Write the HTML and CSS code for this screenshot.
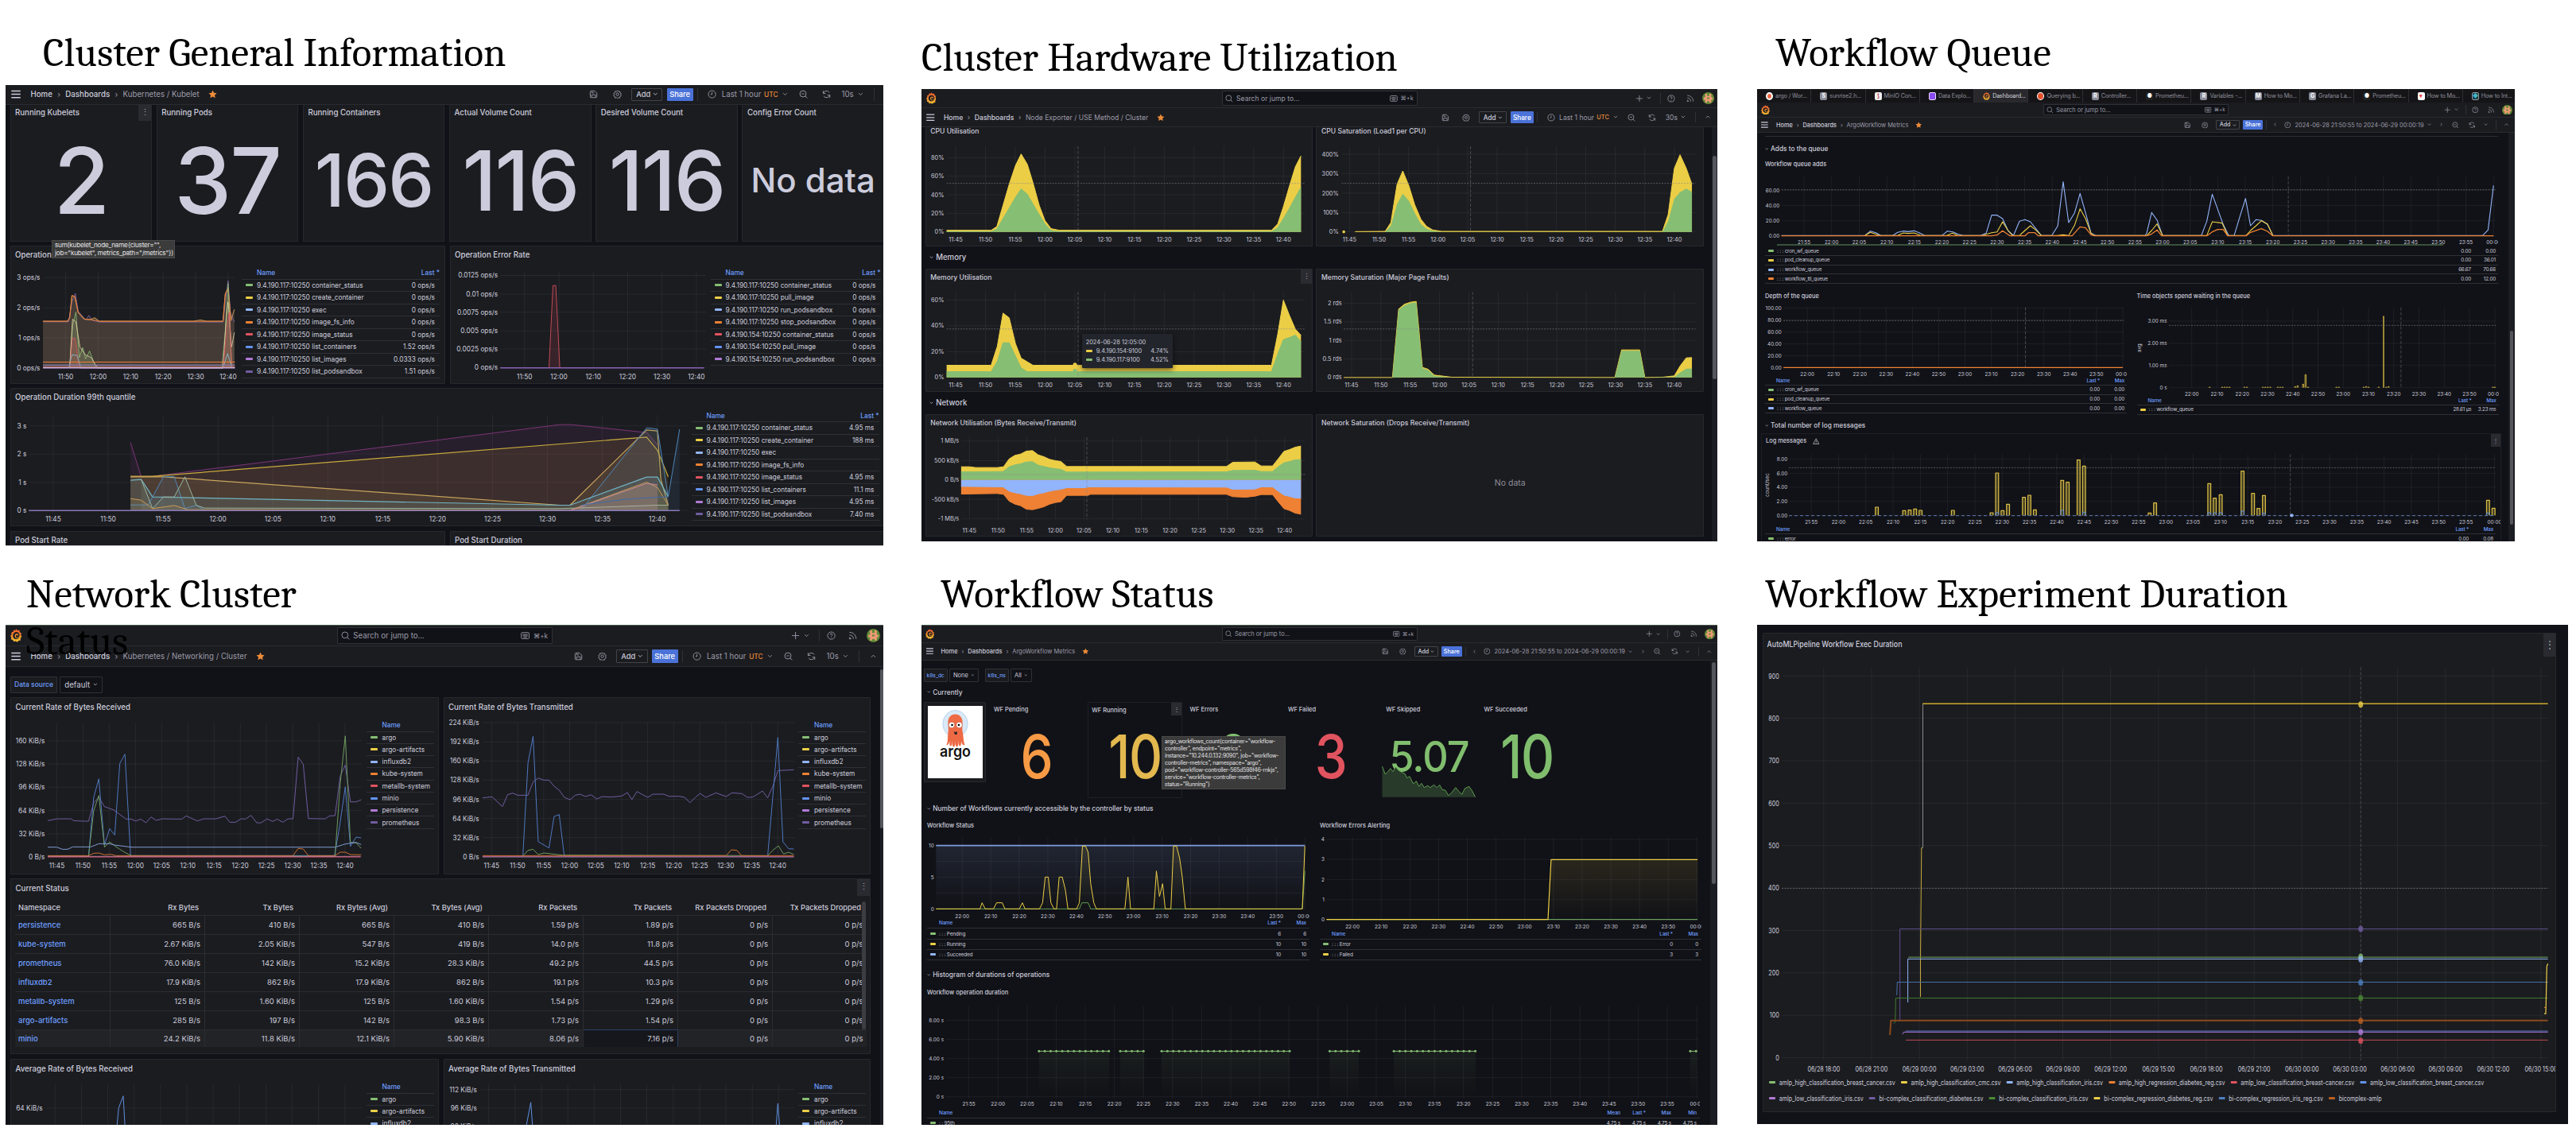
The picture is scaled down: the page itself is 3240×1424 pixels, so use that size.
FILE: index.html
```html
<!DOCTYPE html>
<html lang="en">
<head>
<meta charset="utf-8">
<title>Cluster dashboards</title>
<link rel="stylesheet" href="styles.css">
</head>
<body>
<svg width="0" height="0" class="defs" aria-hidden="true">
  <defs>
    <linearGradient id="flame" x1="0" y1="0" x2="0" y2="1"><stop offset="0" stop-color="#f0562b"/><stop offset="1" stop-color="#f5c332"/></linearGradient>
    <linearGradient id="fade-blue" x1="0" y1="0" x2="0" y2="1"><stop offset="0" stop-color="#92b4fa" stop-opacity=".12"/><stop offset="1" stop-color="#92b4fa" stop-opacity="0"/></linearGradient>
    <linearGradient id="fade-yellow" x1="0" y1="0" x2="0" y2="1"><stop offset="0" stop-color="#ecce46" stop-opacity=".11"/><stop offset="1" stop-color="#ecce46" stop-opacity="0"/></linearGradient>
    <linearGradient id="fade-green" x1="0" y1="0" x2="0" y2="1"><stop offset="0" stop-color="#86be73" stop-opacity=".07"/><stop offset="1" stop-color="#86be73" stop-opacity="0"/></linearGradient>
  </defs>
  <symbol id="i-menu" viewBox="0 0 16 16"><path d="M1 3h14M1 8h14M1 13h14" stroke-width="1.8"/></symbol>
  <symbol id="i-star" viewBox="0 0 16 16"><path d="M8 .8l2.2 4.6 5 .7-3.600 3.500.9 5L8 12.200l-4.500 2.400.9-5L.8 6.100l5-.7z" fill="#ec8b39" stroke="none"/></symbol>
  <symbol id="i-save" viewBox="0 0 16 16"><path d="M2 3.500A1.500 1.500 0 013.500 2H10l4 4v6.500a1.500 1.500 0 01-1.500 1.500h-9A1.500 1.500 0 012 12.500zM5 2v3.500h4M4.500 14V9h7v5"/></symbol>
  <symbol id="i-gear" viewBox="0 0 16 16"><circle cx="8" cy="8" r="2.400"/><path d="M8 1.200l1.700 1.900 2.500-.4.5 2.500 2.200 1.200L13.800 8.700l1 2.300-2.300 1.200-.5 2.500-2.500-.4L8 15.300 6.400 14l-2.600.6-.5-2.500-2.200-1.200L2.200 8.600l-1-2.300 2.300-1.200.5-2.500 2.400.5z"/></symbol>
  <symbol id="i-clock" viewBox="0 0 16 16"><circle cx="8" cy="8" r="6.600"/><path d="M8 4v4.300H5.500"/></symbol>
  <symbol id="i-zoom" viewBox="0 0 16 16"><circle cx="7.200" cy="7.200" r="5.700"/><path d="M11.500 11.500l3.500 3.500M4.800 7.200h4.800"/></symbol>
  <symbol id="i-refresh" viewBox="0 0 16 16"><path d="M2 6.500A6.200 6.200 0 0113.300 5M14 9.500A6.200 6.200 0 012.700 11M2 1.800v4.700h4.500M14 14.200V9.500H9.500"/></symbol>
  <symbol id="i-caret" viewBox="0 0 10 10"><path d="M1.500 3.200L5 6.700l3.500-3.500"/></symbol>
  <symbol id="i-up" viewBox="0 0 10 10"><path d="M1 7.200l4-4 4 4"/></symbol>
  <symbol id="i-left" viewBox="0 0 10 10"><path d="M6.500 1.500L3.500 5l3 3.500"/></symbol>
  <symbol id="i-right" viewBox="0 0 10 10"><path d="M3.500 1.500L6.500 5l-3 3.500"/></symbol>
  <symbol id="i-plus" viewBox="0 0 16 16"><path d="M8 1.500v13M1.500 8h13"/></symbol>
  <symbol id="i-help" viewBox="0 0 16 16"><circle cx="8" cy="8" r="6.600"/><path d="M6.200 6.300a1.800 1.800 0 113 1.400c-.8.600-1.200.9-1.200 1.700M8 11v1"/></symbol>
  <symbol id="i-rss" viewBox="0 0 16 16"><path d="M2 2c7 0 12 5 12 12M2 7c4.500 0 7 2.500 7 7M2 11.500c1.500 0 2.500 1 2.500 2.500H2z"/></symbol>
  <symbol id="i-search" viewBox="0 0 16 16"><circle cx="7" cy="7" r="5.600"/><path d="M11 11l4 4"/></symbol>
  <symbol id="i-kbd" viewBox="0 0 16 16"><rect x="1" y="2.500" width="14" height="11" rx="1.500"/><path d="M3.500 6h9M3.500 8.500h9M5 11h6"/></symbol>
  <symbol id="i-warn" viewBox="0 0 16 16"><path d="M8 1.500l6.800 12.500H1.200zM8 6v4M8 11.500v1.200"/></symbol>
  <symbol id="i-grafana" viewBox="0 0 16 18"><path fill="url(#flame)" stroke="none" d="M8 0l1.800 2 2.800-.3.500 2.800 2.300 1.200-.9 2.600 1.300 2.500-1.800 2 .2 2.700-2.800.6L9.600 18 7.400 16.600l-2.700.8L3.400 15 .9 14.300l.6-2.600L0 9.500l1.700-1.900L1.400 5l2.400-1.100.9-2.500 2.200.4z"/><path fill="#1b1c20" stroke="none" d="M8.300 4.200a4.900 4.900 0 00-4.800 5c0 2.800 2.100 4.800 4.700 4.800 2 0 3.500-1.200 4.100-2.800-.9 1.100-2 1.600-3.200 1.500a3.300 3.300 0 01-3-3.300c0-1.700 1.200-3 2.800-3 1.300 0 2.300.9 2.300 2.100 0 .9-.5 1.500-1.200 1.600.2-.2.3-.5.300-.8 0-.6-.5-1.100-1.200-1.100-.8 0-1.400.7-1.400 1.600 0 1.200.9 2 2.100 2 1.700 0 3-1.400 3-3.200 0-2.500-2-4.400-4.500-4.400z"/></symbol>
  <symbol id="i-avatar" viewBox="0 0 16 16"><circle cx="8" cy="8" r="8" fill="#5f8a35" stroke="none"/><path fill="#f09a76" stroke="none" d="M4 2h2.500v3h3V2H12v5h2v3h-2v4H9.500v-2h-3v2H4v-4H2V7h2z"/><path fill="#5f8a35" stroke="none" d="M6.500 7h3v2h-3z"/></symbol>
</svg>

<main class="sheet">
  <figure class="shot s1">
    <figcaption>Cluster General Information</figcaption>
    <div class="board b1">
      <div data-nav="Kubernetes / Kubelet" data-refresh="10s" data-nocollapse></div>
      <div class="stats">
        <section class="panel"><h3>Running Kubelets</h3><i class="dots"></i><b class="xl">2</b></section>
        <section class="panel"><h3>Running Pods</h3><b class="xl">37</b></section>
        <section class="panel"><h3>Running Containers</h3><b class="md">166</b></section>
        <section class="panel"><h3>Actual Volume Count</h3><b class="big">116</b></section>
        <section class="panel"><h3>Desired Volume Count</h3><b class="big">116</b></section>
        <section class="panel"><h3>Config Error Count</h3><b class="sm">No data</b></section>
        <div class="tip query">sum(kubelet_node_name{cluster="",<br>job="kubelet", metrics_path="/metrics"})</div>
      </div>
      <div class="pair ops">
        <section class="panel"><h3>Operation</h3><div class="body"><svg class="chart" data-chart="opRate"></svg><div class="legend bar-r" data-legend="opRate"></div></div></section>
        <section class="panel"><h3>Operation Error Rate</h3><div class="body"><svg class="chart" data-chart="opError"></svg><div class="legend" data-legend="opError"></div></div></section>
      </div>
      <section class="panel quant"><h3>Operation Duration 99th quantile</h3><div class="body"><svg class="chart" data-chart="opDuration"></svg><div class="legend" data-legend="opDuration"></div></div></section>
      <div class="pair tail">
        <section class="panel"><h3>Pod Start Rate</h3></section>
        <section class="panel"><h3>Pod Start Duration</h3></section>
      </div>
    </div>
  </figure>

  <figure class="shot s2">
    <figcaption>Cluster Hardware Utilization</figcaption>
    <div class="board b2">
      <div data-top></div>
      <div data-nav="Node Exporter / USE Method / Cluster" data-refresh="30s"></div>
      <div class="scroll">
        <div class="pair r1">
          <section class="panel"><h3>CPU Utilisation</h3><svg class="chart" data-chart="cpuUtil"></svg></section>
          <section class="panel"><h3>CPU Saturation (Load1 per CPU)</h3><svg class="chart" data-chart="cpuSat"></svg></section>
        </div>
        <h2><svg class="ic"><use href="#i-caret"/></svg>Memory</h2>
        <div class="pair r2">
          <section class="panel"><h3>Memory Utilisation</h3><i class="dots"></i><svg class="chart" data-chart="memUtil"></svg>
            <div class="tip point"><p>2024-06-28 12:05:00</p><p><i class="sw y"></i>9.4.190.154:9100<span>4.74%</span></p><p><i class="sw g"></i>9.4.190.117:9100<span>4.52%</span></p></div>
          </section>
          <section class="panel"><h3>Memory Saturation (Major Page Faults)</h3><svg class="chart" data-chart="memSat"></svg></section>
        </div>
        <h2><svg class="ic"><use href="#i-caret"/></svg>Network</h2>
        <div class="pair r3">
          <section class="panel"><h3>Network Utilisation (Bytes Receive/Transmit)</h3><svg class="chart" data-chart="netUtil"></svg></section>
          <section class="panel"><h3>Network Saturation (Drops Receive/Transmit)</h3><div class="empty">No data</div></section>
        </div>
        <i class="thumb"></i>
      </div>
    </div>
  </figure>

  <figure class="shot s3">
    <figcaption>Workflow Queue</figcaption>
    <div class="board b3">
      <div class="tabs">
        <span><i class="fav argo"></i>argo / Wor...</span><span><i class="fav gr">S</i>sunrise2.h...</span><span><i class="fav minio">⟆</i>MinIO Con...</span><span><i class="fav data"></i>Data Explo...</span><span class="on"><svg class="fv"><use href="#i-grafana"/></svg>Dashboard...</span><span><i class="fav prom"></i>Querying b...</span><span><i class="fav gr">R</i>Controller...</span><span><i class="fav dk">●</i>Prometheu...</span><span><i class="fav gr">R</i>Variables -...</span><span><i class="fav gr">M</i>How to Mo...</span><span><i class="fav gr">G</i>Grafana La...</span><span><i class="fav dk">●</i>Prometheu...</span><span><i class="fav wh">▾</i>How to Mo...</span><span><i class="fav teal">◆</i>How to Int...</span>
      </div>
      <div data-top></div>
      <div data-nav="ArgoWorkflow Metrics" data-range></div>
      <div class="scroll">
        <div class="cut"></div>
        <h2><svg class="ic"><use href="#i-caret"/></svg>Adds to the queue</h2>
        <section class="flat adds"><h3>Workflow queue adds</h3><svg class="chart" data-chart="queueAdds"></svg><div class="legend" data-legend="queueAdds"></div></section>
        <div class="pair depth">
          <section class="flat"><h3>Depth of the queue</h3><svg class="chart" data-chart="queueDepth"></svg><div class="legend" data-legend="queueDepth"></div></section>
          <section class="flat"><h3>Time objects spend waiting in the queue</h3><svg class="chart" data-chart="queueWait"></svg><div class="legend" data-legend="queueWait"></div></section>
        </div>
        <h2><svg class="ic"><use href="#i-caret"/></svg>Total number of log messages</h2>
        <section class="flat logs"><h3>Log messages <svg class="ic"><use href="#i-warn"/></svg></h3><i class="dots"></i><svg class="chart" data-chart="logs"></svg><div class="legend" data-legend="logs"></div></section>
        <i class="thumb"></i>
      </div>
    </div>
  </figure>

  <figure class="shot s4">
    <figcaption>Network Cluster Status</figcaption>
    <div class="board b4">
      <div data-top></div>
      <div data-nav="Kubernetes / Networking / Cluster" data-refresh="10s"></div>
      <div class="scroll">
        <div class="vars"><label>Data source</label><span>default <svg class="ic"><use href="#i-caret"/></svg></span></div>
        <div class="pair rates">
          <section class="panel"><h3>Current Rate of Bytes Received</h3><div class="body"><svg class="chart" data-chart="rx"></svg><div class="legend" data-legend="ns"></div></div></section>
          <section class="panel"><h3>Current Rate of Bytes Transmitted</h3><div class="body"><svg class="chart" data-chart="tx"></svg><div class="legend" data-legend="ns"></div></div></section>
        </div>
        <section class="panel status"><h3>Current Status</h3><i class="dots"></i>
          <table>
            <thead><tr><th>Namespace</th><th>Rx Bytes</th><th>Tx Bytes</th><th>Rx Bytes (Avg)</th><th>Tx Bytes (Avg)</th><th>Rx Packets</th><th>Tx Packets</th><th>Rx Packets Dropped</th><th>Tx Packets Dropped</th></tr></thead>
            <tbody>
              <tr><td>persistence</td><td>665 B/s</td><td>410 B/s</td><td>665 B/s</td><td>410 B/s</td><td>1.59 p/s</td><td>1.89 p/s</td><td>0 p/s</td><td>0 p/s</td></tr>
              <tr><td>kube-system</td><td>2.67 KiB/s</td><td>2.05 KiB/s</td><td>547 B/s</td><td>419 B/s</td><td>14.0 p/s</td><td>11.8 p/s</td><td>0 p/s</td><td>0 p/s</td></tr>
              <tr><td>prometheus</td><td>76.0 KiB/s</td><td>142 KiB/s</td><td>15.2 KiB/s</td><td>28.3 KiB/s</td><td>49.2 p/s</td><td>44.5 p/s</td><td>0 p/s</td><td>0 p/s</td></tr>
              <tr><td>influxdb2</td><td>17.9 KiB/s</td><td>862 B/s</td><td>17.9 KiB/s</td><td>862 B/s</td><td>19.1 p/s</td><td>10.3 p/s</td><td>0 p/s</td><td>0 p/s</td></tr>
              <tr><td>metallb-system</td><td>125 B/s</td><td>1.60 KiB/s</td><td>125 B/s</td><td>1.60 KiB/s</td><td>1.54 p/s</td><td>1.29 p/s</td><td>0 p/s</td><td>0 p/s</td></tr>
              <tr><td>argo-artifacts</td><td>285 B/s</td><td>197 B/s</td><td>142 B/s</td><td>98.3 B/s</td><td>1.73 p/s</td><td>1.54 p/s</td><td>0 p/s</td><td>0 p/s</td></tr>
              <tr class="hover"><td>minio</td><td>24.2 KiB/s</td><td>11.8 KiB/s</td><td>12.1 KiB/s</td><td>5.90 KiB/s</td><td>8.06 p/s</td><td class="cell">7.16 p/s</td><td>0 p/s</td><td>0 p/s</td></tr>
            </tbody>
          </table>
          <i class="inner-thumb"></i>
        </section>
        <div class="pair avg">
          <section class="panel"><h3>Average Rate of Bytes Received</h3><div class="body"><svg class="chart" data-chart="avgRx"></svg><div class="legend" data-legend="ns"></div></div></section>
          <section class="panel"><h3>Average Rate of Bytes Transmitted</h3><div class="body"><svg class="chart" data-chart="avgTx"></svg><div class="legend" data-legend="ns"></div></div></section>
        </div>
        <i class="thumb"></i>
      </div>
    </div>
  </figure>

  <figure class="shot s5">
    <figcaption>Workflow Status</figcaption>
    <div class="board b5">
      <div data-top></div>
      <div data-nav="ArgoWorkflow Metrics" data-range></div>
      <div class="scroll">
        <div class="vars"><label>k8s_dc</label><span>None <svg class="ic"><use href="#i-caret"/></svg></span><label class="nx">k8s_ns</label><span>All <svg class="ic"><use href="#i-caret"/></svg></span></div>
        <h2><svg class="ic"><use href="#i-caret"/></svg>Currently</h2>
        <div class="now">
          <section class="panel logo">
            <svg viewBox="0 0 69 91">
              <rect width="69" height="91" fill="#fff"/>
              <ellipse cx="34.500" cy="22.500" rx="15.500" ry="17" fill="#d9e9f8" stroke="#b9d4ee"/>
              <path d="M25.500 24c-1-9 3-13.500 9-13.500s10 4.500 9 13.500c-.5 5 0 8 .5 10 .8 5 1 12 2.500 15-2.500 1-4-1-4.500-5 0 3 0 6-1.500 6.500-2 0-2-4-2.200-7 0 3 0 8-1.700 8s-2-4-2-8c-.2 4 0 8-2 8s-1.700-4-1.700-8c-.5 3-.2 7-2 7s-1.600-3-1.500-6c-1 3-2 5.500-4 4.500 2-3 1.500-10 2-15 .4-2 .600-5 .1-10z" fill="#ee6a45"/>
              <circle cx="30" cy="24" r="3.800" fill="#fff" stroke="#c24a2c" stroke-width=".6"/><circle cx="39.500" cy="24" r="3.800" fill="#fff" stroke="#c24a2c" stroke-width=".6"/>
              <circle cx="30.500" cy="24" r="1.300"/><circle cx="39" cy="24" r="1.300"/>
              <path d="M32.500 32q2.300 2 4.500 0l-.5 4h-2.500z" fill="#222"/>
              <text x="34.500" y="64" text-anchor="middle" class="wordmark" textLength="39" lengthAdjust="spacingAndGlyphs">argo</text>
            </svg>
          </section>
          <section class="flat"><h3>WF Pending</h3><b class="or">6</b></section>
          <section class="flat frame"><h3>WF Running</h3><i class="dots"></i><b class="ye">10</b></section>
          <section class="flat"><h3>WF Errors</h3><b class="gn">0</b></section>
          <section class="flat"><h3>WF Failed</h3><b class="re">3</b></section>
          <section class="flat"><h3>WF Skipped</h3><b class="gn small">5.07</b><svg class="spark" data-chart="spark"></svg></section>
          <section class="flat"><h3>WF Succeeded</h3><b class="gn">10</b></section>
          <div class="tip labels">argo_workflows_count{container="workflow-<br>controller", endpoint="metrics",<br>instance="10.244.0.132:9090", job="workflow-<br>controller-metrics", namespace="argo",<br>pod="workflow-controller-565d598f46-rnkjs",<br>service="workflow-controller-metrics",<br>status="Running"}</div>
        </div>
        <h2 class="second"><svg class="ic"><use href="#i-caret"/></svg>Number of Workflows currently accessible by the controller by status</h2>
        <div class="pair wf">
          <section class="flat"><h3>Workflow Status</h3><svg class="chart" data-chart="wfStatus"></svg><div class="legend" data-legend="wfStatus"></div></section>
          <section class="flat"><h3>Workflow Errors Alerting</h3><svg class="chart" data-chart="wfErrors"></svg><div class="legend" data-legend="wfErrors"></div></section>
        </div>
        <h2 class="third"><svg class="ic"><use href="#i-caret"/></svg>Histogram of durations of operations</h2>
        <section class="flat hist"><h3>Workflow operation duration</h3><svg class="chart" data-chart="opHist"></svg><div class="legend" data-legend="opHist"></div></section>
        <i class="thumb"></i>
      </div>
    </div>
  </figure>

  <figure class="shot s6">
    <figcaption>Workflow Experiment Duration</figcaption>
    <div class="board b6">
      <section class="panel"><h3>AutoMLPipeline Workflow Exec Duration</h3><i class="dots"></i><svg class="chart" data-chart="exec"></svg>
        <div class="keys">
          <p><span><i class="sw g"></i>amlp_high_classification_breast_cancer.csv</span><span><i class="sw y"></i>amlp_high_classification_cmc.csv</span><span><i class="sw b"></i>amlp_high_classification_iris.csv</span><span><i class="sw o"></i>amlp_high_regression_diabetes_reg.csv</span><span><i class="sw r"></i>amlp_low_classification_breast-cancer.csv</span><span><i class="sw sb"></i>amlp_low_classification_breast_cancer.csv</span></p>
          <p><span><i class="sw p"></i>amlp_low_classification_iris.csv</span><span><i class="sw dp"></i>bi-complex_classification_diabetes.csv</span><span><i class="sw dg"></i>bi-complex_classification_iris.csv</span><span><i class="sw y"></i>bi-complex_regression_diabetes_reg.csv</span><span><i class="sw db"></i>bi-complex_regression_iris_reg.csv</span><span><i class="sw br"></i>bicomplex-amlp</span></p>
        </div>
      </section>
    </div>
  </figure>
</main>
<script src="charts.js"></script>
</body>
</html>
```

FILE: styles.css
```css
* { box-sizing: border-box; }
body { margin: 0; background: #fff; font-family: Inter, "Liberation Sans", sans-serif; }
.defs { position: absolute; }

.sheet {
  width: 3240px; height: 1424px; overflow: hidden;
  padding-left: 7px;
  display: grid;
  grid-template-columns: 1152px 1051px 1020px;
  grid-template-rows: 687px 737px;
}
.shot { margin: 0; display: flex; flex-direction: column; }
figcaption {
  font-family: Cambria, Caladea, "Liberation Serif", serif;
  font-size: 51px; line-height: 59px; color: #000; white-space: nowrap;
  flex: none;
}
.s1 figcaption { height: 107px; padding: 37px 0 0 47px; }
.s2 figcaption { height: 112px; padding: 43px 0 0 0; }
.s3 figcaption { height: 112px; padding: 37px 0 0 23px; }
.s4 figcaption, .s5 figcaption, .s6 figcaption { height: 99px; padding-top: 31px; }
.s4 figcaption { padding-left: 26px; width: 420px; white-space: normal; z-index: 5; }
.s5 figcaption { padding-left: 24px; }
.s6 figcaption { padding-left: 10px; }

/* boards */
.board {
  background: #111217; color: #ccccdc; overflow: hidden; position: relative;
  display: flex; flex-direction: column; font-weight: 400;
}
.b1 { width: 1104px; height: 581px; font-size: 9.7px; border-bottom: 1px solid #d3ccd2; --bar: 24.5px; }
.b2 { width: 1001px; height: 569px; font-size: 8.600px; --bar: 24px; --sw: 246px; }
.b3 { width: 953px; height: 569px; font-size: 7.400px; --bar: 19px; --sw: 233px; }
.b4 { width: 1104px; height: 629px; font-size: 9.700px; --bar: 26px; --sw: 271px; border-top: 1px solid #4a5a50; }
.b5 { width: 1001px; height: 629px; font-size: 7.500px; --bar: 22px; --sw: 246px; border-top: 1px solid #4a5a50; }
.b6 { width: 1020px; height: 628px; font-size: 10.500px; padding: 10px 15px 0 7px; }

.ic { width: 1.15em; height: 1.15em; fill: none; stroke: currentColor; stroke-width: 1.3; flex: none; overflow: visible; }
.ic.c { width: .7em; height: .7em; }
h2, h3, p { margin: 0; }
h3 { font-size: 1em; font-weight: 500; padding-left: 5.5px; white-space: nowrap; flex: none; }
h2 { font-size: 1.12em; font-weight: 500; display: flex; align-items: center; gap: .3em; white-space: nowrap; flex: none; }
h2 .ic { width: .55em; height: .55em; }

/* toolbars */
.top, .nav {
  height: var(--bar); flex: none; background: #1b1c20; border-bottom: 1px solid #2a2b31;
  display: flex; align-items: center; white-space: nowrap; color: #9b9ba8;
}
.top { display: grid; grid-template-columns: 1fr var(--sw) 1fr; }
.top .brand { width: 1.5em; height: 1.75em; margin-left: .65em; }
.search {
  height: calc(var(--bar) - 5px); border: 1px solid #303137; border-radius: 1px; background: #111217;
  display: flex; align-items: center; gap: .45em; padding: 0 .45em;
}
.search .kbi { margin-left: auto; }
.search .kb { font-size: .85em; }
.top .rt { display: flex; align-items: center; justify-content: flex-end; padding-right: .45em; }
.top .av { width: 1.75em; height: 1.75em; margin-left: 1.2em; }
.sep { width: 1px; height: 55%; min-height: 1.600em; background: #303137; flex: none; }
.nav .ic.m { width: 1.45em; height: 1.35em; color: #ccccdc; margin: 0 1.200em 0 .6em; }
.nav em { font-style: normal; font-weight: 500; color: #ccccdc; }
.nav > i { font-style: normal; width: 1.700em; text-align: center; }
.nav u { text-decoration: none; }
.nav .st { margin-left: 1.200em; }
.nav .rt { margin-left: auto; display: flex; align-items: center; height: 100%; }
.add, .share { height: 1.75em; display: flex; align-items: center; justify-content: center; gap: .3em; border-radius: 1px; font-size: .96em; font-weight: 500; color: #ccccdc; }
.add { width: 4.2em; border: 1px solid #43444b; }
.share { width: 3.550em; background: #4a72d8; color: #fff; margin: 0 .55em; }
.utc { color: #ec8b39; font-size: .86em; font-weight: 500; }

/* panels */
.panel { background: #1b1c20; border: 1px solid #27282d; border-radius: 1px; position: relative; display: flex; flex-direction: column; min-width: 0; overflow: visible; }
.flat { position: relative; display: flex; flex-direction: column; min-width: 0; }
.pair { display: grid; grid-template-rows: 100%; flex: none; }
.body { display: flex; flex: 1; min-height: 0; }
.chart { flex: 1; min-width: 0; min-height: 0; width: 100%; height: 0; display: block; overflow: hidden; }
.chart text { font-size: .857em; fill: #ccccdc; }
.body .chart { width: 0; height: 100%; }
.dots { position: absolute; right: 0; top: 0; width: 1.65em; height: 2.150em; background: #2a2b30; display: flex; align-items: center; justify-content: center; font-style: normal; }
.dots::before { content: "⋮"; color: #a5a5b3; font-size: 1.100em; line-height: 1; }
.tip { position: absolute; z-index: 4; background: #3b3b3b; color: #e3e3e6; border: 1px solid #4a4a4a; white-space: nowrap; }
.thumb { position: absolute; border-radius: 3px; background: #55565c; }
.scroll { flex: 1; position: relative; min-height: 0; overflow: hidden; }

/* legends */
.legend { flex: none; font-size: .857em; }
.legend div { display: flex; align-items: center; height: var(--rh); border-bottom: 1px solid #2f3035; white-space: nowrap; }
.legend div.hd { color: #6e9fff; font-weight: 500; }
.legend .nm { flex: 1; padding-left: 9px; }
.legend .sw + .nm { padding-left: 5px; }
.legend .hd .nm { padding-left: calc(var(--in) + 14px); }
.sw { display: inline-block; width: 9px; height: 3px; border-radius: 1px; flex: none; }
.legend .sw { margin-left: var(--in); }
.legend .v { text-align: right; }
.g { background: #86be73; } .y { background: #ecce46; } .b { background: #92b4fa; } .o { background: #ee8133; }
.r { background: #e0535f; } .sb { background: #6393ef; } .p { background: #b07ad6; } .dp { background: #705da0; }
.dg { background: #4a8a35; } .db { background: #4d7fc0; } .br { background: #b8601f; }

/* board 1 */
.stats { display: grid; grid-template-columns: repeat(6, 178.500px); gap: 5.700px; padding-left: 5.500px; height: 172px; flex: none; position: relative; }
.stats .panel { border-top: 0; align-items: stretch; }
.b1 h3 { line-height: 22px; }
.stats h3 { height: 20px; line-height: 20px; }
.stats b { flex: 1; display: flex; align-items: center; justify-content: center; font-weight: 500; letter-spacing: -.02em; line-height: 1; height: 0; }
.xl { font-size: 115px; } .big { font-size: 104px; } .md { font-size: 92px; }
.stats .sm { font-size: 42px; letter-spacing: 0; }
.query { left: 58px; top: 170.500px; width: 155px; height: 23px; font-size: 8.200px; line-height: 9.700px; padding: 1px 3px; letter-spacing: -.03em; }
.b1 .pair { grid-template-columns: 547.500px 552px; gap: 5.500px; padding-left: 5.500px; }
.ops { height: 173.500px; margin-top: 5.700px; }
.b1 .legend { --rh: 15.500px; --in: 5px; margin: 4px 5px 0 0; }
.ops .panel:first-child .legend { width: 249px; margin-right: 6px; }
.ops .panel:last-child .legend { width: 214px; margin-right: 9px; }
.b1 .hd .v { padding-right: 0; }
.b1 .v { padding-right: 6px; }
.quant { margin: 5.500px 0 0 5.500px; height: 174px; width: 1110px; flex: none; }
.quant .legend { width: 236px; margin: 4.500px 16px 0 0; }
.b1 .tail { margin-top: 5.500px; height: 40px; }

/* board 2 */
.b2 .pair { grid-template-columns: 487.500px 487.500px; gap: 4.300px; padding-left: 4.700px; }
.b2 h2 { height: 27.500px; padding-left: 10px; }
.b2 h3 { line-height: 20px; }
.b2 .r1 { height: 150px; } .b2 .r1 h3 { line-height: 11px; } .b2 .r1 .panel { border-top: 0; }
.b2 .r2 { height: 155.500px; } .b2 .r3 { height: 154.500px; }
.b2 .scroll { border-right: 7px solid #1c1d22; overflow: visible; }
.b2 .thumb { right: -6px; width: 5px; top: 36px; height: 281px; }
.empty { flex: 1; display: flex; align-items: center; justify-content: center; font-size: 10.500px; color: #8e8e99; padding-bottom: 0; }
.point { left: 196px; top: 81px; width: 114px; height: 43px; background: #22252b; border: 0; padding: 5px 5px; font-size: 7.400px; line-height: 11px; box-shadow: 0 2px 6px #0009; color: #ccccdc; border-radius: 1px; }
.point p { display: flex; align-items: center; gap: 5px; }
.point .sw { width: 8px; }
.point span { margin-left: auto; }

/* board 3 */
.tabs { height: 17px; flex: none; background: #151518; display: grid; grid-template-columns: repeat(14, 68.300px); font-size: 7.200px; color: #8f8f99; }
.tabs span { display: flex; align-items: center; gap: 3px; padding-left: 11px; border-right: 1px solid #2e2e33; white-space: nowrap; overflow: hidden; letter-spacing: -.02em; }
.tabs .on { background: #29292d; color: #d5d5dc; }
.fav, .fv { width: 9px; height: 10px; flex: none; border-radius: 2px; font: 700 7px/10px Inter, sans-serif; text-align: center; color: #fff; background: #8a8b99; }
.fv { background: none; }
.fav.argo { background: #ee6a45; border: 2px solid #fff; border-radius: 50%; }
.fav.minio { background: #eee; color: #c0304a; }
.fav.data { background: #8a4bf0; border: 1px solid #e9d8ff; }
.fav.prom { background: #e6522c; border: 1.500px solid #fff; border-radius: 50%; }
.fav.dk { background: #222; } .fav.wh { background: #fff; color: #e33; } .fav.teal { background: #0f3a4a; color: #46b5c4; border: 1px solid #999; line-height: 8px; }
.b3 .scroll { border-right: 8px solid #1c1d22; }
.b3 .thumb { right: -6px; width: 4px; top: 249px; height: 244px; }
.b3 .scroll { overflow: visible; }
.cut { height: 5px; border-bottom: 1px solid #2c2d33; margin: 0 13px 0 10px; }
.b3 h2 { height: 30px; padding-left: 10px; }
.b3 h3 { height: 12px; line-height: 12px; padding-left: 0; }
.adds { margin: -1px 13px 0 10px; height: 156px; }
.b3 .legend { --rh: 11.670px; --in: 4px; letter-spacing: -.03em; }
.b3 .legend .sw { width: 7px; } .b3 .legend .hd .nm { padding-left: 14px; } .b3 .legend .sw + .nm { padding-left: 4px; }
.b3 .v { width: 31px; padding-right: 3px; }
.depth { grid-template-columns: 455px 455px; gap: 12.500px; padding-left: 10px; margin-top: 10px; height: 153px; }
.depth .flat:last-child { height: 154.500px; }
.b3 .scroll h2 + .logs { margin-top: -5px; }
.logs { margin: 0 9px 0 5px; height: 140px; border: 1px solid #1e1f24; }
.logs h3 { padding-left: 5px; height: 18px; line-height: 18px; display: flex; align-items: center; gap: 8px; }
.logs .legend { margin: 0 6px 0 4px; }

/* board 4 */
.b4 .scroll { border-right: 4px solid #1c1d22; overflow: visible; }
.b4 .thumb { right: -4px; width: 4px; top: 3px; height: 200px; }
.vars { display: flex; }
.vars label, .vars span { border: 1px solid #303137; display: flex; align-items: center; justify-content: center; font-size: .88em; font-weight: 500; border-radius: 1px; }
.vars span { font-size: 1em; font-weight: 400; gap: .4em; background: #111217; }
.vars .ic { width: .6em; height: .6em; }
.vars label { color: #6e9fff; background: #1b1c20; }
.b4 .vars { padding: 11.500px 0 5.500px 6px; height: 38.300px; gap: 3px; }
.b4 .vars label { width: 59px; } .b4 .vars span { width: 54px; }
.b4 .pair { grid-template-columns: 538.500px 537.500px; gap: 6px; padding-left: 6px; }
.b4 h3 { line-height: 23px; }
.b4 .rates { height: 222.500px; }
.b4 .legend { --rh: 15.270px; --in: 5px; width: 85px; margin: 4px 5px 0 0; }
.b4 .hd .nm { padding-left: 20px; }
.b4 .legend .sw + .nm { padding-left: 6px; }
.status { margin: 5.500px 0 6px 6px; width: 1082px; height: 221px; }
table { border-collapse: collapse; table-layout: fixed; width: 1071px; margin-left: 5px; font-size: .98em; }
th { font-weight: 500; text-align: right; padding: 3px 7px 0 0; height: 22px; white-space: nowrap; font-size: .98em; }
td { text-align: right; padding: 0 4.500px 0 0; height: 24px; border-top: 1px solid #2c2d32; border-right: 1px solid #2c2d32; }
td:first-child, th:first-child { text-align: left; padding-left: 4px; }
td:first-child { color: #6e9fff; font-weight: 500; }
td:last-child { border-right: 0; }
.hover { background: #222327; }
.hover .cell { background: #15171c; border: 1px solid #2d3f66; border-bottom: 0; }
.hover td { height: 22px; }
.inner-thumb { position: absolute; right: 5px; top: 28px; width: 5px; height: 161px; border-radius: 3px; background: #3c3d43; }
.b4 .avg { height: 120px; }

/* board 5 */
.b5 .scroll { border-right: 9px solid #1c1d22; overflow: visible; }
.b5 .thumb { right: -7px; width: 5px; top: 2px; height: 279px; }
.b5 .vars { padding: 10px 0 0 2.700px; height: 27px; gap: 2px; }
.b5 .vars label { width: 30px; } .b5 .vars span { width: 37px; } .b5 .vars span:last-child { width: 27px; }
.b5 .vars .nx { margin-left: 6px; }
.b5 h2 { height: 25px; padding-left: 7px; }
.now { display: grid; grid-template-columns: 78.500px repeat(6, 119px); gap: 4.300px; padding-left: 2.700px; height: 121px; position: relative; }
.now h3 { height: 19px; line-height: 19px; }
.logo { height: 101px; padding: 4px 4px 0; }
.logo svg { width: 69px; height: 91px; }
.wordmark { font: 600 19px Inter, sans-serif; fill: #111; }
.now b { flex: 1; display: flex; align-items: center; justify-content: center; font-weight: 500; font-size: 76px; letter-spacing: -.02em; line-height: 1; padding-bottom: 4px; transform: scaleX(.86); }
.now b.small { font-size: 53px; padding-bottom: 2px; transform: scaleX(.95); }
.frame { border: 1px solid #1f2025; margin: 0; }
.frame h3 { padding-left: 4.500px; }
.or { color: #f79a45; } .ye { color: #e2b84f; } .gn { color: #80be6e; } .re { color: #e0535f; }
.spark { position: absolute; left: 0; bottom: 0; width: 119px; height: 42px; }
.labels { left: 302px; top: 42.500px; width: 156px; height: 67px; font-size: 6.900px; line-height: 9.100px; padding: 1px 3px; letter-spacing: -.03em; }
.wf { grid-template-columns: 481px 480px; gap: 13px; padding-left: 7px; height: 178px; }
.b5 .wf h3, .hist h3 { padding-left: 0; height: 17px; line-height: 17px; }
.b5 .legend { --rh: 13.200px; --in: 4px; letter-spacing: -.03em; }
.b5 .legend .sw { width: 7px; } .b5 .legend .hd .nm { padding-left: 15px; } .b5 .legend .sw + .nm { padding-left: 4px; }
.b5 .v { width: 32px; padding-right: 4px; }
.b5 h2.second { height: 26px; }
.b5 h2.third { height: 36px; }
.hist { margin: -4px 13px 0 7px; height: 180px; }

/* board 6 */
.b6 .panel { width: 998px; height: 603px; }
.b6 h3 { height: 28px; line-height: 28px; transform: scaleX(.84); transform-origin: 0 0; }
.b6 .dots { width: 15px; height: 29px; }
.keys { flex: none; height: 47px; transform: scaleX(.79); transform-origin: 0 0; width: 1250px; font-size: 9px; padding-left: 9px; }
.keys p { display: flex; height: 20.500px; align-items: center; gap: 9px; white-space: nowrap; }
.keys span { display: flex; align-items: center; gap: 6px; }
.keys .sw { width: 10px; }
```

FILE: charts.js
```js
const icon = (name, cls = '') => `<svg class="ic ${cls}"><use href="#i-${name}"/></svg>`;

document.querySelectorAll('[data-top]').forEach(el => {
  el.className = 'top';
  el.innerHTML = `<svg class="brand"><use href="#i-grafana"/></svg>
    <div class="search">${icon('search')}<span>Search or jump to...</span>${icon('kbd', 'kbi')}<span class="kb">⌘+k</span></div>
    <div class="rt">${icon('plus', 'pl')}${icon('caret', 'c k1')}<i class="sep"></i>${icon('help', 'hp')}${icon('rss', 'rs')}<svg class="av"><use href="#i-avatar"/></svg></div>`;
});

document.querySelectorAll('[data-nav]').forEach(el => {
  el.className = 'nav';
  const range = 'range' in el.dataset;
  const time = range
    ? `${icon('left', 'c g1')}${icon('clock', 'g2')}<span class="t">2024-06-28 21:50:55 to 2024-06-29 00:00:19</span>${icon('caret', 'c g4')}${icon('right', 'c g5')}${icon('zoom', 'g6')}${icon('refresh', 'g7')}`
    : `${icon('clock', 'g0')}<span class="t">Last 1 hour</span><span class="utc">UTC</span>${icon('caret', 'c g4')}${icon('zoom', 'g8')}${icon('refresh', 'g9')}<span class="every">${el.dataset.refresh}</span>`;
  el.innerHTML = `${icon('menu', 'm')}<em>Home</em><i>›</i><em>Dashboards</em><i>›</i><u>${el.dataset.nav}</u>${icon('star', 'st')}
    <div class="rt ${range ? 'range' : ''}">${icon('save', 'sv')}${icon('gear', 'ge')}<span class="add">Add ${icon('caret', 'c')}</span><span class="share">Share</span><i class="sep"></i>
    ${time}${icon('caret', 'c last')}<i class="sep"></i>${'nocollapse' in el.dataset ? '<span class="stub"></span>' : icon('up', 'c fold')}</div>`;
});

/* horizontal rhythm of the toolbar, in em */
const gaps = {
  '.sv': [0, 1.9], '.ge': [0, 1.3], '.g0': [1.3, .65], '.utc': [.45, 0], '.g4': [.6, 0], '.g8': [1.45, 0], '.g9': [1.85, 0],
  '.every': [1.35, .5], '.last': [0, 1.4], '.fold': [1.4, 1], '.stub': [0, 1.15],
  '.g1': [1.1, 0], '.g2': [1.2, .65], '.g5': [1.4, 0], '.g6': [1.35, 0], '.g7': [1.8, 1.3],
  '.pl': [0, .5], '.k1': [0, 1.2], '.hp': [1, 0], '.rs': [1.6, 0]
};
for (const [sel, [l, r]] of Object.entries(gaps))
  document.querySelectorAll('.rt ' + sel).forEach(e => { e.style.marginLeft = l + 'em'; e.style.marginRight = r + 'em'; });

const G = '#86be73', Y = '#ecce46', B = '#92b4fa', O = '#ee8133', R = '#e0535f', B2 = '#5f8fe0', P = '#b07ad6', DP = '#705da0';

const ip = (a, list) => list.map(n => a + ':10250 ' + n);
const k117 = '9.4.190.117', k154 = '9.4.190.154';
const order = ['g', 'y', 'b', 'o', 'r', 'sb', 'p', 'dp'];
const rows = (names, vals) => names.map((n, i) => [order[i], n, ...(vals ? [].concat(vals[i]) : [])]);
const runtime = ip(k117, ['container_status', 'create_container', 'exec', 'image_fs_info', 'image_status', 'list_containers', 'list_images', 'list_podsandbox']);
const zero = '0 ops/s';
const legends = {
  opRate: { head: ['Name', 'Last *'], rows: rows(runtime, [zero, zero, zero, zero, zero, '1.52 ops/s', '0.0333 ops/s', '1.51 ops/s']) },
  opError: { head: ['Name', 'Last *'], rows: rows([...ip(k117, ['container_status', 'pull_image', 'run_podsandbox', 'stop_podsandbox']), ...ip(k154, ['container_status', 'pull_image', 'run_podsandbox'])], Array(7).fill(zero)) },
  opDuration: { head: ['Name', 'Last *'], rows: rows(runtime, ['4.95 ms', '188 ms', '', '', '4.95 ms', '11.1 ms', '4.95 ms', '7.40 ms']) },
  ns: { head: ['Name'], rows: rows(['argo', 'argo-artifacts', 'influxdb2', 'kube-system', 'metallb-system', 'minio', 'persistence', 'prometheus']) },
  queueAdds: { rows: rows([': : : cron_wf_queue', ': : : pod_cleanup_queue', ': : : workflow_queue', ': : : workflow_ttl_queue'], [['0.00', '0.00'], ['0.00', '36.01'], ['66.67', '70.66'], ['0.00', '12.00']]) },
  queueDepth: { head: ['Name', 'Last *', 'Max'], rows: rows([': : : cron_wf_queue', ': : : pod_cleanup_queue', ': : : workflow_queue'], Array(3).fill(['0.00', '0.00'])) },
  queueWait: { head: ['Name', 'Last *', 'Max'], rows: [['y', ': : : workflow_queue', '28.61 µs', '3.23 ms']] },
  logs: { head: ['Name', 'Last *', 'Max'], rows: [['g', ': : : error', '0.00', '0.08']] },
  wfStatus: { head: ['Name', 'Last *', 'Max'], rows: rows([': : : Pending', ': : : Running', ': : : Succeeded'], [['6', '6'], ['10', '10'], ['10', '10']]) },
  wfErrors: { head: ['Name', 'Last *', 'Max'], rows: rows([': : : Error', ': : : Failed'], [['0', '0'], ['3', '3']]) },
  opHist: { head: ['Name', 'Mean', 'Last *', 'Max', 'Min'], rows: [['g', ': : 95th', '4.75 s', '4.75 s', '4.75 s', '4.75 s']] }
};
document.querySelectorAll('[data-legend]').forEach(el => {
  const d = legends[el.dataset.legend];
  const cells = a => a.map(v => `<span class="v">${v}</span>`).join('');
  el.innerHTML = (d.head ? `<div class="hd"><span class="nm">${d.head[0]}</span>${cells(d.head.slice(1))}</div>` : '') +
    d.rows.map(([c, n, ...v]) => `<div><i class="sw ${c}"></i><span class="nm">${n}</span>${cells(v)}</div>`).join('');
});

/* ticks */
const clock = (start, step, n) => Array.from({ length: n }, (_, i) => {
  const t = start + i * step;
  return String(Math.floor(t / 60) % 24).padStart(2, '0') + ':' + String(t % 60).padStart(2, '0');
});
const at = (x0, dx, labels) => labels.map((l, i) => [x0 + dx * i, l]);
const hour = clock(705, 5, 12), evening = clock(1315, 5, 25), tens = clock(1320, 10, 12);

/* each chart: m = origin and scale of its data space, plot = [left, right, top, bottom] */
const M = {
  a: [0, 350, 1.4, 3], b: [1150, 30, 1.537, 3], c: [1150, 330, 1.537, 3], d: [2200, 30, 1.6, 3], e: [2200, 350, 1.6, 3],
  f: [0, 710, 1.4, 3], g: [0, 1090, 1.4, 3], h: [1150, 710, 1.537, 3], i: [1150, 1060, 1.537, 3], j: [2200, 710, 1.508, 2.196]
};
const bars = (list, base, w) => list.map(([x, y]) => `${x - w},${base} ${x - w},${y} ${x + w},${y} ${x + w},${base}`);
const logBars = [[257, 864], [312, 877], [323, 875], [334, 871], [345, 876], [410, 876], [488, 885], [499, 735], [510, 877], [521, 853], [553, 827], [564, 819], [575, 874], [630, 763], [641, 770], [663, 686], [674, 709], [806, 886], [817, 848], [926, 775], [937, 830], [949, 817], [993, 728], [1014, 812], [1025, 869], [1036, 820], [1487, 838], [1498, 868]];
const logBlue = [[499, 885], [630, 876], [674, 883], [926, 885], [937, 886], [949, 885], [993, 879], [1036, 887], [1487, 886]];
const waitBars = [[926, 411], [951, 411], [956, 411], [961, 411], [966, 411], [996, 411], [1001, 411], [1033, 411], [1038, 411], [1043, 411], [1048, 411], [1063, 411], [1068, 411], [1073, 411], [1098, 409], [1103, 406], [1114, 400], [1119, 364], [1124, 411], [1181, 411], [1186, 411], [1236, 411], [1241, 409], [1246, 411], [1266, 411], [1281, 411], [1286, 409], [1496, 411], [1500, 411]];
const segs = [[241, 377], [398, 444], [478, 725], [803, 859], [927, 1085], [1500, 1512]];

const charts = {
  opRate: {
    m: M.a, plot: [75, 413, -24, 339], yr: 70, xy: 372, yt: [[-2, '3 ops/s'], [112, '2 ops/s'], [225, '1 ops/s'], [339, '0 ops/s']], xt: at(115, 57.2, clock(710, 10, 6)),
    s: [
      { c: '#b58a52', p: '75,163 118,163 122,150 126,66 131,70 137,130 148,155 158,157 166,150 174,163 340,163 352,158 362,163 392,163 396,60 401,38 406,160 412,118', fill: 'rgba(170,130,85,.22)', w: 1.2 },
      { c: '#8d6bb0', p: '75,165 120,165 126,90 132,58 137,125 150,158 156,141 162,160 174,166 392,166 397,70 401,10 405,130 412,166', fill: 'rgba(150,130,130,.12)', w: .8 },
      { c: O, p: '75,163 118,163 122,150 126,66 131,70 137,130 148,155 160,157 168,160 174,163 392,163 396,60 401,38 406,160', w: 1, open: 1 },
      { c: G, p: '122,339 127,180 133,128 139,300 145,262 150,305 157,275 165,320 172,339 390,339 396,200 401,20 407,339', fill: 'rgba(134,190,115,.15)', w: .8 },
      { c: '#e6d9a5', p: '122,339 127,155 133,165 140,260 150,290 160,300 170,339 392,339 398,140 401,90 407,260 412,205', w: .8, fill: 'rgba(230,217,165,.12)' },
      { c: R, p: '122,339 127,225 132,230 139,339 392,339 399,180 403,130 408,339', w: .8, fill: 'rgba(224,83,95,.2)' },
      { c: '#7fc6e0', p: '120,339 126,290 135,292 142,339 392,339 400,285 408,339', w: .8 },
      { c: O, p: '75,317 413,317' }, { c: '#8a78a0', p: '75,328 413,328', w: 1.5 }, { c: '#b57f6a', p: '75,335 413,335', w: 1 }, { c: '#c8a6e0', p: '75,339 413,339', w: 1.5 }]
  },
  opError: {
    m: M.a, plot: [880, 1243, -24, 339], yr: 876, xy: 372, yt: [[-10, '0.0125 ops/s'], [61, '0.01 ops/s'], [129, '0.0075 ops/s'], [199, '0.005 ops/s'], [268, '0.0025 ops/s'], [338, '0 ops/s']], xt: at(923, 60.5, clock(710, 10, 6)),
    s: [{ c: '#c04a55', p: '966,338 973,28 978,28 985,338', fill: 'rgba(224,83,95,.15)' }, { c: '#8a62b5', p: '880,339 1239,339', w: 1.5 }]
  },
  opDuration: {
    m: M.a, plot: [50, 1211, 516, 886], yr: 46, xy: 910, yt: [[558, '3 s'], [664, '2 s'], [771, '1 s'], [877, '0 s']], xt: at(93, 96.7, hour),
    s: [
      { c: '#7c3577', p: '229,620 248,750 268,748 985,553 1005,553 1138,583 1157,630', fill: 'rgba(140,60,140,.12)', base: 877 },
      { c: '#c9ab3c', p: '229,748 268,748 1138,600 1157,650 1176,750', fill: 'rgba(200,150,50,.13)', base: 877, w: 1.200 },
      { c: '#c9a65c', p: '229,750 287,750 985,857 1003,857 1138,573 1157,577 1163,760 1176,857', fill: 'rgba(200,166,92,.12)', base: 877, w: 1.200 },
      { c: '#4f86b8', p: '1022,877 1138,565 1157,570 1176,825 1196,570', fill: 'rgba(79,134,184,.12)', base: 877 },
      { c: '#71b5c4', p: '229,763 248,760 268,826 985,857 1003,857 1138,751 1157,751 1176,825', fill: 'rgba(113,181,196,.14)', base: 877, w: 1.200 },
      { c: '#4f86b8', p: '229,856 260,856 268,826 287,750 306,749 325,870 345,857 360,877', fill: 'rgba(79,134,184,.12)', base: 877 },
      { c: '#9bb59c', p: '248,760 268,870 287,826 306,826 325,750 345,858 360,868 985,870 1157,857 1176,857', fill: 'rgba(155,181,156,.12)', base: 877 },
      { c: '#c99a55', p: '229,832 248,838 268,870 306,858 330,874 1003,876 1138,770 1157,790 1176,857', fill: 'rgba(201,154,85,.14)', base: 877 },
      { c: '#c58a95', p: '1003,877 1138,775 1157,780', fill: 'rgba(220,170,180,.2)', base: 877 },
      { c: '#3f6aa8', p: '1022,857 1100,835 1150,828 1176,825' },
      { c: '#8a78b8', p: '50,877 1196,877', w: 1.500 }]
  },
  cpuUtil: {
    m: M.b, plot: [62, 754, 462, 785], yr: 57, xy: 815, hv: [602, 316], yt: [[505, '80%'], [575, '60%'], [645, '40%'], [715, '20%'], [785, '0%']], xt: at(79.5, 57.6, hour),
    s: [{ c: Y, solid: 1, p: '62,779 148,779 159,765 171,685 183,605 195,535 206,491 218,530 229,600 241,685 252,742 264,773 280,779 690,779 702,755 713,690 725,610 736,540 747,498' },
      { c: G, solid: 1, p: '62,784 148,784 159,775 171,735 183,695 195,655 206,623 218,643 229,680 241,720 252,755 264,780 280,784 690,784 702,770 713,735 725,695 736,655 747,617' }]
  },
  cpuSat: {
    m: M.b, plot: [827, 1511, 462, 785], yr: 821, xy: 815, hv: [602, 1076], yt: [[492, '400%'], [565, '300%'], [639, '200%'], [712, '100%'], [785, '0%']], xt: at(842, 57.1, hour),
    s: [{ c: Y, solid: 1, p: '853,784 911,783 922,750 934,605 945,555 957,612 968,682 980,737 991,764 1003,778 1020,783 1447,783 1458,720 1470,545 1481,494 1493,545 1504,605' },
      { c: G, solid: 1, w: .1, p: '911,785 922,762 934,680 945,641 957,668 968,713 980,755 991,773 1003,781 1020,785 1447,785 1458,745 1470,660 1481,635 1493,622 1504,634' }],
    dots: [[831, 785, Y, 1.800]]
  },
  memUtil: {
    m: M.c, plot: [62, 754, 110, 433], yr: 57, xy: 463, hv: [250, 316], yt: [[141, '60%'], [238, '40%'], [336, '20%'], [433, '0%']], xt: at(79.5, 57.6, hour),
    s: [{ c: Y, solid: 1, p: '62,387 148,387 160,315 171,190 183,208 195,305 206,360 229,387 690,387 702,270 713,141 725,200 736,250 747,274' },
      { c: G, solid: 1, p: '62,411 148,411 160,372 171,302 183,302 195,352 206,397 218,411 690,411 702,345 713,290 725,282 736,273 747,298' }],
    dots: [[310, 385, Y, 2.500], [310, 408, G, 2.500]]
  },
  memSat: {
    m: M.c, plot: [831, 1511, 110, 433], yr: 827, xy: 463, hv: [250, 1080], yt: [[153, '2 rds'], [223, '1.5 rds'], [293, '1 rds'], [363, '0.5 rds'], [433, '0 rds']], xt: at(846, 56.7, hour),
    s: [{ c: Y, solid: 1, p: '831,433 925,433 937,175 948,157 960,149 971,146 983,395 994,402 1006,424 1040,432 1355,433 1368,329 1403,329 1413,433 1447,432 1470,427 1481,390 1493,359 1504,358' },
      { c: G, solid: 1, w: .1, p: '925,433 937,178 948,161 960,152 971,150 983,398 994,405 1006,427 1040,433 1355,433 1368,332 1403,332 1413,433 1470,431 1481,415 1493,400 1504,400' }]
  },
  netUtil: {
    m: M.c, plot: [90, 755, 658, 967], yr: 86, xy: 1011, hv: [799, 333], yt: [[673, '1 MB/s'], [747, '500 kB/s'], [820, '0 B/s'], [893, '-500 kB/s'], [967, '-1 MB/s']], xt: at(106, 55.4, hour),
    s: [{ c: Y, solid: 1, base: 820, p: '90,770 106,770 118,773 160,773 172,770 183,740 194,727 205,722 216,711 228,709 239,725 250,732 261,742 272,747 283,750 294,769 603,769 615,753 658,752 670,767 692,767 703,740 714,712 725,705 736,696 747,692' },
      { c: G, solid: 1, base: 820, p: '90,789 171,788 183,770 194,763 205,759 216,752 228,751 239,764 261,774 283,780 294,790 603,789 615,784 658,783 670,788 692,788 703,770 714,755 725,750 736,744 747,743' },
      { c: O, solid: 1, base: 820, p: '90,873 160,871 172,874 183,900 194,911 205,917 216,930 228,932 239,927 250,921 261,911 272,905 283,902 294,878 335,878 340,874 603,874 615,883 640,885 658,881 670,875 692,875 703,902 714,928 725,935 736,945 747,949' },
      { c: B, solid: 1, base: 820, p: '90,844 171,846 183,862 194,868 205,872 216,878 228,879 239,872 250,868 261,862 272,858 283,855 294,849 330,849 335,846 603,847 615,855 658,854 670,846 692,846 703,862 714,877 725,882 736,888 747,888' }]
  },
  queueAdds: {
    m: M.d, plot: [65, 1502, 576, 800], yr: 61, xy: 824, hv: [626, 1085], yt: [[628, '60.00'], [685, '40.00'], [743, '20.00'], [800, '0.00']], xt: at(110.500, 55.500, evening).concat([[1498, '00:00']]),
    s: [{ c: B, p: '65,799 233,799 244,782 255,788 265,799 289,799 299,787 310,782 320,784 332,781 342,788 353,799 388,799 399,782 410,785 421,794 430,799 466,799 477,790 488,722 499,722 510,735 521,780 532,799 544,745 555,739 566,747 577,773 588,799 609,799 621,763 632,596 643,750 655,713 666,640 677,713 688,790 697,799 797,799 800,790 810,712 821,741 832,799 910,799 921,745 932,643 943,700 954,757 965,799 976,799 988,725 999,659 1009,762 1020,739 1031,742 1043,757 1054,799 1476,799 1487,778 1498,610', w: 1.100 },
      { c: Y, p: '233,799 244,787 262,799 299,799 310,789 320,791 332,789 345,799 398,799 409,790 420,799 470,799 488,788 499,785 510,747 521,780 530,799 544,799 555,780 566,762 577,778 588,799 620,799 632,796 643,799 655,760 666,698 677,735 688,790 695,799 800,799 810,780 821,755 832,799 921,799 932,747 952,752 963,799 1000,799 1009,780 1020,762 1031,743 1043,755 1054,799', w: 1.100 },
      { c: O, p: '65,800 488,800 499,797 510,781 521,795 525,800 555,800 562,788 575,788 582,800 650,800 666,766 677,770 688,796 695,800 800,800 810,793 821,778 830,800 921,800 932,785 943,776 954,776 963,800 1000,800 1009,787 1031,773 1043,783 1054,800 1498,800', w: 1.300 },
      { c: '#47694a', p: '56,834 1397,834', w: 1.600 }]
  },
  queueDepth: {
    m: M.e, plot: [69, 754, 110, 337], yr: 65, xy: 361, hv: [160, 556], yt: [[112, '100.00'], [157, '80.00'], [202, '60.00'], [247, '40.00'], [292, '20.00'], [337, '0.00']], xt: at(117, 52.900, tens).concat([[752, '00:00']]),
    s: [{ c: O, p: '69,337 752,337', w: 1.200 }]
  },
  queueWait: {
    m: M.e, plot: [844, 1502, 110, 413], yr: 840, xy: 437, hv: [178, 1311], yt: [[162, '3.00 ms'], [246, '2.00 ms'], [329, '1.00 ms'], [413, '0 s']], xt: at(890, 50.800, tens).concat([[1500, '00:00']]),
    side: [785, 263, 'avg'],
    s: [...bars(waitBars, 413, 1.200).map(p => ({ c: Y, p, w: .8 })), { c: Y, solid: 1, base: 413, p: '1275,144 1277,144' }]
  },
  logs: {
    m: M.e, plot: [80, 1502, 664, 895], yr: 77, xy: 919, hv: [715, 1089], yt: [[683, '8.00'], [736, '6.00'], [789, '4.00'], [842, '2.00'], [895, '0.00']], xt: at(125, 54.900, evening).concat([[1500, '00:00']]),
    side: [37, 780, 'count/sec'],
    s: [...bars(logBars, 895, 3).map(p => ({ c: '#d9bd45', p, w: 1.200, fill: 'rgba(236,206,70,.25)' })),
      ...bars(logBlue, 895, 3).map(p => ({ c: B2, p, w: 1 })),
      { c: '#5f79b5', p: '80,896 1502,896', dash: '4 3' }],
    dots: [[1092, 895, B, 2.200]]
  },
  rx: {
    m: M.f, plot: [84, 637, 598, 1105], yr: 79, xy: 1138, yt: [[667, '160 KiB/s'], [754, '128 KiB/s'], [842, '96 KiB/s'], [930, '64 KiB/s'], [1018, '32 KiB/s'], [1105, '0 B/s']], xt: at(100, 46.150, hour),
    s: [{ c: DP, p: '84,968 100,961 125,961 130,968 148,970 156,970 165,900 174,880 184,915 200,927 222,962 231,962 239,969 248,962 257,976 266,954 275,967 285,961 320,962 328,950 340,962 348,969 358,961 380,961 396,951 405,974 415,974 424,961 432,962 442,948 452,976 460,976 470,961 480,971 488,962 498,974 507,961 516,961 525,728 534,755 543,960 573,961 580,950 590,949 599,800 608,758 617,897 627,897 636,889' },
      { c: '#4f78c0', p: '156,1100 165,880 174,810 184,1060 193,998 202,1022 211,752 220,717 230,1100 589,1100 598,990 608,840 617,1065 627,1030 636,1033' },
      { c: '#6d9a5e', p: '84,1102 156,1102 165,930 174,873 184,1068 193,1048 202,1063 211,1076 220,1088 231,1100 590,1102 599,830 608,648 617,1050 627,1052 636,1072' },
      { c: '#7f9bd0', p: '84,1068 100,1068 110,1076 119,1076 128,1067 160,1067 174,1055 193,1055 202,1060 231,1068 590,1068 608,1056 627,1050 636,1058' },
      { c: '#c96f30', p: '84,1100 156,1100 165,1091 174,1090 184,1097 195,1095 205,1100 516,1100 525,1073 534,1075 543,1100 590,1100 599,1087 608,1087 617,1096 636,1097' },
      { c: '#b890d0', p: '84,1103 635,1103' }, { c: '#d0505a', p: '84,1105 635,1105' }]
  },
  tx: {
    m: M.f, plot: [849, 1399, 598, 1105], yr: 843, xy: 1138, yt: [[598, '224 KiB/s'], [671, '192 KiB/s'], [743, '160 KiB/s'], [815, '128 KiB/s'], [888, '96 KiB/s'], [960, '64 KiB/s'], [1032, '32 KiB/s'], [1105, '0 B/s']], xt: at(865, 45.800, hour),
    s: [{ c: DP, p: '849,882 866,878 884,915 893,870 902,864 911,872 929,872 938,822 947,807 957,815 966,815 975,838 984,853 993,880 1003,889 1012,872 1021,868 1030,877 1040,870 1050,886 1060,877 1075,879 1094,875 1104,862 1112,888 1121,858 1131,870 1140,880 1149,868 1168,868 1177,876 1196,876 1205,880 1214,900 1224,880 1232,865 1242,880 1260,863 1278,877 1288,863 1306,866 1315,880 1325,879 1342,856 1351,882 1360,840 1369,779 1397,776' },
      { c: '#4f78c0', p: '849,1103 920,1103 929,750 938,649 947,1047 966,1071 975,952 984,945 993,1103 1351,1103 1360,880 1369,654 1378,1048 1388,1074 1397,1075' },
      { c: '#6d9a5e', p: '920,1102 929,1080 938,1076 947,1096 957,1090 990,1098 1351,1100 1360,1080 1370,1063 1379,1094 1388,1087 1397,1096' },
      { c: '#c96f30', p: '849,1100 1278,1100 1287,1078 1297,1080 1305,1100 1397,1100' },
      { c: '#d0505a', p: '849,1103 1397,1103' }, { c: '#8a72b0', p: '849,1105 1397,1105' }]
  },
  avgRx: { m: M.g, plot: [80, 637, 822, 1105], yr: 75, xy: 1138, yt: [[912, '64 KiB/s']], xt: at(97, 46.400, hour), s: [{ c: '#5f8fe0', p: '206,980 209,912 217,867 220,980' }] },
  avgTx: { m: M.g, plot: [846, 1399, 822, 1105], yr: 839, xy: 1138, yt: [[843, '112 KiB/s'], [912, '96 KiB/s'], [981, '80 KiB/s']], xt: at(860, 46.400, hour), s: [{ c: '#5f8fe0', p: '926,980 934,891 937,980' }, { c: '#5f8fe0', p: '1366,980 1369,895 1372,980' }] },
  spark: { m: M.h, bare: 1, s: [{ c: '#5c9a50', base: 878, fill: '#283a2a', p: '904,762 910,792 915,782 920,770 925,782 930,765 936,778 942,785 948,790 952,806 957,800 964,828 970,818 975,838 980,826 985,842 992,835 997,842 1004,832 1010,842 1015,832 1020,850 1026,852 1032,872 1038,862 1046,842 1052,856 1058,868 1064,845 1072,838 1078,855 1084,878' }] },
  wfStatus: {
    m: M.i, plot: [42, 756, -20, 250], yr: 38, xy: 278, yt: [[11, '10'], [70, ''], [130, '5'], [190, ''], [250, '0']], xt: at(92.500, 55.200, tens).concat([[755, '00:00']]),
    s: [{ c: '#7f9be0', p: '42,11 755,11', fill: 'url(#fade-blue)', base: 250, w: 1.600 },
      { c: '#5f9a50', p: '42,250 319,250 324,227 336,227 341,250 750,250 755,107' },
      { c: Y, fill: 'url(#fade-yellow)', base: 250, p: '42,250 127,250 131,227 137,250 153,250 159,227 170,227 175,250 203,250 209,227 214,250 242,250 248,227 253,130 259,130 264,227 270,250 275,250 280,130 286,130 292,178 297,250 314,250 319,227 325,13 331,13 336,36 341,155 347,227 352,250 407,250 413,130 418,250 463,250 468,107 474,203 480,155 485,250 496,250 501,13 507,13 513,60 518,130 524,250 750,250 755,13' }]
  },
  wfErrors: {
    m: M.i, plot: [797, 1514, -20, 290], yr: 793, xy: 317, yt: [[-12, '4'], [63, '3'], [139, '2'], [215, '1'], [290, '0']], xt: at(847, 55.500, tens).concat([[1513, '00:00']]),
    s: [{ c: '#6a9f5b', p: '797,290 1514,290', w: 1.300 }, { c: Y, fill: 'url(#fade-yellow)', base: 290, p: '797,290 1225,290 1231,64 1514,64', w: 1.200 }]
  },
  opHist: {
    m: M.i, plot: [61, 1515, 616, 965], yr: 57, xy: 986, yt: [[670, '8.00 s'], [743, '6.00 s'], [815, '4.00 s'], [887, '2.00 s'], [959, '0 s']], xt: at(105.500, 56.250, evening).concat([[1513, '00:00']]),
    s: segs.map(([a, b]) => ({ c: G, p: `${a},787 ${b},787`, fill: 'url(#fade-green)', box: [a, b, 787, 959] })),
    dots: segs.flatMap(([a, b]) => Array.from({ length: Math.round((b - a) / 11.250) + 1 }, (_, i) => [a + i * 11.250, 787, G, 1.500]))
  },
  exec: {
    m: M.j, k: .8, big: 1, plot: [62, 1515, 284, 1370], yr: 57, xy: 1395, hv: [895, 1160],
    yt: [900, 800, 700, 600, 500, 400, 300, 200, 100, 0].map((v, i) => [308 + i * 117.200, String(v)]),
    xt: at(141.500, 90.700, ['06/28 18:00', '06/28 21:00', '06/29 00:00', '06/29 03:00', '06/29 06:00', '06/29 09:00', '06/29 12:00', '06/29 15:00', '06/29 18:00', '06/29 21:00', '06/30 00:00', '06/30 03:00', '06/30 06:00', '06/30 09:00', '06/30 12:00', '06/30 15:00']),
    s: [{ c: '#d0d6d0', p: '329.500,783 329.500,386', w: .6 }, { c: '#c9ab3c', p: '325,1195 325,1085 327,783 329,783' }, { c: '#c9a92f', p: '329,385 1515,385', w: 1.500 },
      { c: '#5e4f8c', p: '286,1262 286,1007 1515,1007' }, { c: '#5f8a50', p: '302,1085 1515,1085', w: 1.400 }, { c: '#92b4fa', p: '301,1210 301,1090 1515,1090' },
      { c: '#4470a8', p: '280,1190 281,1154 1515,1154' }, { c: '#3f7a30', p: '274,1268 277,1265 278,1198 1515,1198' },
      { c: '#8a4a1c', p: '267,1300 269,1260 1515,1260', w: 2 }, { c: '#4f6fb5', p: '297,1289 1515,1289' }, { c: '#a778d8', p: '291,1298 293,1292 1515,1292' }, { c: '#c04a55', p: '297,1314 1515,1314' },
      { c: Y, p: '1508,1241 1511,1241 1513,1110 1515,1103', w: 1.200 }, { c: O, p: '1508,1224 1511,1224' }],
    dots: [[1160, 387, Y], [1160, 1007, DP], [1160, 1084, G], [1160, 1091, B], [1160, 1155, '#4d7fc0'], [1160, 1198, '#4a8a35'], [1160, 1261, '#b8601f'], [1160, 1292, P], [1160, 1316, R]].map(d => [...d, 3])
  }
};

document.querySelectorAll('[data-chart]').forEach(svg => {
  const d = charts[svg.dataset.chart], r = svg.getBoundingClientRect();
  svg.setAttribute('viewBox', `${r.x} ${r.y} ${r.width} ${r.height}`);
  const [ox, oy, sx, sy] = d.m;
  const X = x => +(ox + x / sx).toFixed(2), Yy = y => +(oy + y / sy).toFixed(2);
  const k = d.k || 1;
  const text = (x, y, t, a) => `<text text-anchor="${a}" dy=".36em" transform="translate(${x} ${y}) scale(${k} 1)">${t}</text>`;
  let out = '';
  if (!d.bare) {
    const [l, rt, t, b] = d.plot.map((v, i) => i < 2 ? X(v) : Yy(v));
    const grid = 'stroke="#ccccdc" stroke-opacity=".075"';
    d.yt.forEach(([y, s]) => out += `<path d="M${l} ${Yy(y)}H${rt}" ${grid}/>` + text(X(d.yr), Yy(y), s, 'end'));
    d.xt.forEach(([x, s]) => out += (X(x) <= rt ? `<path d="M${X(x)} ${t}V${b}" ${grid}/>` : '') + text(X(x), Yy(d.xy), s, 'middle'));
    if (d.side) out += `<text text-anchor="middle" dy=".36em" transform="translate(${X(d.side[0])} ${Yy(d.side[1])}) rotate(-90)">${d.side[2]}</text>`;
  }
  d.s.forEach(s => {
    const pts = s.p.split(' ').map(q => q.split(',').map(Number));
    const line = 'M' + pts.map(([x, y]) => X(x) + ' ' + Yy(y)).join('L');
    const base = Yy(s.base ?? (d.plot ? d.plot[3] : 0));
    if (s.box) out += `<rect x="${X(s.box[0])}" y="${Yy(s.box[2])}" width="${X(s.box[1]) - X(s.box[0])}" height="${Yy(s.box[3]) - Yy(s.box[2])}" fill="${s.fill}"/>`;
    else if (s.solid || s.fill) out += `<path d="${line}V${base}H${X(pts[0][0])}Z" fill="${s.solid ? s.c : s.fill}"/>`;
    out += `<path d="${line}" fill="none" stroke="${s.c}" stroke-width="${s.w || 1}" stroke-linejoin="round" ${s.dash ? `stroke-dasharray="${s.dash}"` : ''}/>`;
  });
  if (d.hv) {
    const [l, rt, t, b] = d.plot.map((v, i) => i < 2 ? X(v) : Yy(v));
    out += `<path d="M${l} ${Yy(d.hv[0])}H${rt}" stroke="#85868f" stroke-opacity=".6" stroke-dasharray="2 1.500"/><path d="M${X(d.hv[1])} ${t}V${b}" stroke="#85868f" stroke-opacity=".45" stroke-dasharray="4 2"/>`;
  }
  (d.dots || []).forEach(([x, y, c, q]) => out += `<ellipse cx="${X(x)}" cy="${Yy(y)}" rx="${q}" ry="${q === 3 ? 4 : q}" fill="${c}" ${q === 3 ? 'opacity=".8"' : ''}/>`);
  svg.innerHTML = out;
});
```
